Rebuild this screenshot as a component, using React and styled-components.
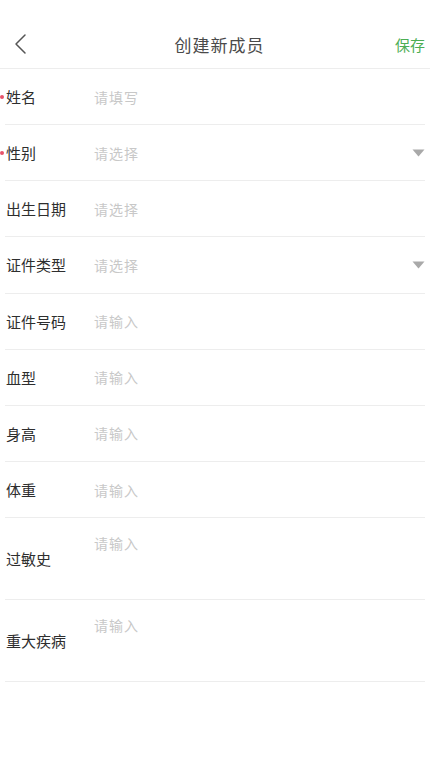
import React from "react";
import styled, { createGlobalStyle } from "styled-components";

const GlobalStyle = createGlobalStyle`
  html, body {
    margin: 0;
    padding: 0;
    background: #fff;
    font-family: "Noto Sans CJK SC", "Noto Sans", sans-serif;
  }
  * { box-sizing: border-box; }
`;

const Page = styled.div`
  width: 430px;
  min-height: 770px;
  background: #fff;
`;

const Header = styled.header`
  height: 69px;
  padding: 20px 5px 0 14px;
  display: flex;
  align-items: center;
  justify-content: space-between;
  border-bottom: 1px solid #ededed;
`;

const Back = styled.button`
  width: 30px;
  height: 30px;
  border: 0;
  padding: 0;
  background: none;
  display: flex;
  align-items: center;
  color: #555;
`;

const Title = styled.h1`
  margin: 0;
  font-size: 17px;
  font-weight: 400;
  letter-spacing: 1px;
  color: #4a4a4a;
`;

const Save = styled.button`
  width: 30px;
  border: 0;
  padding: 0;
  background: none;
  font-family: inherit;
  font-size: 15px;
  color: #4cae54;
  text-align: right;
  white-space: nowrap;
`;

const List = styled.div`
  margin: 0 5px;
`;

const Row = styled.div`
  position: relative;
  display: flex;
  align-items: ${(p) => (p.$tall ? "stretch" : "center")};
  height: ${(p) => (p.$tall ? "82px" : "56.15px")};
  border-bottom: 1px solid #ededed;
`;

const Label = styled.label`
  position: relative;
  flex: 0 0 89px;
  padding-left: 1px;
  display: flex;
  align-items: center;
  font-size: 15px;
  color: #2e2e2e;
`;

const Star = styled.span`
  position: absolute;
  left: -5px;
  top: 50%;
  margin-top: -2px;
  width: 4px;
  height: 4px;
  border-radius: 50%;
  background: #e8536a;
`;

const Field = styled.input`
  flex: 1;
  border: 0;
  outline: none;
  padding: 0;
  background: none;
  font-family: inherit;
  font-size: 14px;
  letter-spacing: 1px;
  color: #333;
  &::placeholder { color: #c8c8c8; }
`;

const Area = styled.textarea`
  flex: 1;
  border: 0;
  outline: none;
  resize: none;
  padding: 15px 0 0;
  background: none;
  font-family: inherit;
  font-size: 14px;
  letter-spacing: 1px;
  line-height: 20px;
  color: #333;
  &::placeholder { color: #c8c8c8; }
`;

const Picker = styled.div`
  flex: 1;
  display: flex;
  align-items: center;
  justify-content: space-between;
  font-size: 14px;
  letter-spacing: 1px;
  color: #c8c8c8;
`;

const Caret = () => (
  <svg width="13" height="8" viewBox="0 0 13 8">
    <path d="M0.5 0.5 H12.5 L6.5 7.5 Z" fill="#a9a9a9" />
  </svg>
);

const fields = [
  { label: "姓名", hint: "请填写", required: true },
  { label: "性别", hint: "请选择", required: true, pick: true, caret: true },
  { label: "出生日期", hint: "请选择", pick: true },
  { label: "证件类型", hint: "请选择", pick: true, caret: true },
  { label: "证件号码", hint: "请输入" },
  { label: "血型", hint: "请输入" },
  { label: "身高", hint: "请输入" },
  { label: "体重", hint: "请输入" },
  { label: "过敏史", hint: "请输入", tall: true },
  { label: "重大疾病", hint: "请输入", tall: true },
];

export default function App() {
  return (
    <Page>
      <GlobalStyle />
      <Header>
        <Back aria-label="返回">
          <svg width="13" height="22" viewBox="0 0 13 22">
            <path d="M11 2 L2 11 L11 20" fill="none" stroke="#555" strokeWidth="1.5" strokeLinecap="round" strokeLinejoin="round" />
          </svg>
        </Back>
        <Title>创建新成员</Title>
        <Save>保存</Save>
      </Header>
      <List>
        {fields.map((f) => (
          <Row key={f.label} $tall={f.tall}>
            <Label>
              {f.required && <Star />}
              {f.label}
            </Label>
            {f.tall ? (
              <Area placeholder={f.hint} />
            ) : f.pick ? (
              <Picker>
                {f.hint}
                {f.caret && <Caret />}
              </Picker>
            ) : (
              <Field placeholder={f.hint} />
            )}
          </Row>
        ))}
      </List>
    </Page>
  );
}
